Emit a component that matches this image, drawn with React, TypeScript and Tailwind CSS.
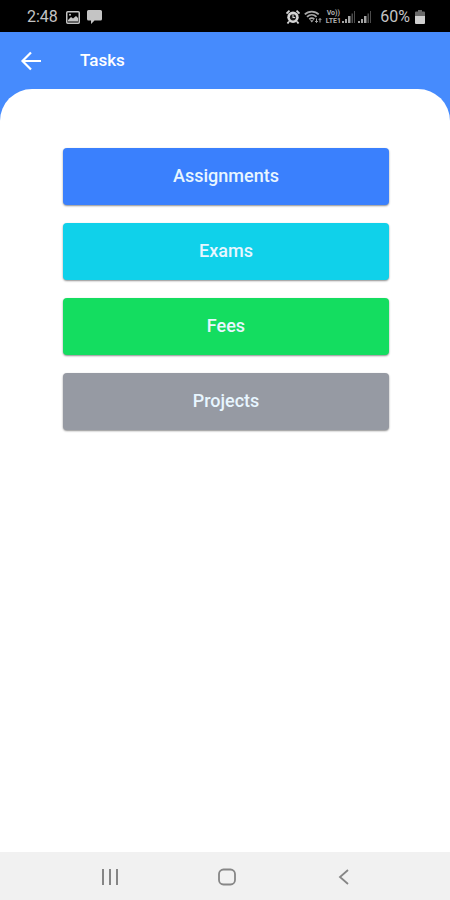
import React from "react";

const tasks = [
  { label: "Assignments", color: "bg-[#3a80fd]" },
  { label: "Exams", color: "bg-[#10d1ea]" },
  { label: "Fees", color: "bg-[#14dd60]" },
  { label: "Projects", color: "bg-[#969aa3]" },
];

function SignalIcon() {
  return (
    <svg className="h-[14px] w-[14px]" viewBox="0 0 14 14" fill="#a4a4a4" aria-hidden="true">
      <path d="M0 11h2v2H0zM3 9h2v4H3zM6 6h2.500v7H6z" />
      <path d="M9.500 3.500h1.500v9.500H9.500zM12 1h1v12h-1z" fill="#4c4c4c" />
    </svg>
  );
}

function StatusBar() {
  return (
    <div className="flex h-8 items-center justify-between bg-black pt-[2px] pr-[25px] pl-[27px] text-[16px] leading-[20px] text-[#c4c4c4]">
      <div className="flex items-center">
        <span>2:48</span>
        <svg className="ml-2 h-[13px] w-[14px]" viewBox="0 0 14 13" aria-hidden="true">
          <rect x="0.75" y="0.75" width="12.5" height="11.5" rx="1" fill="none" stroke="#c4c4c4" strokeWidth="1.5" />
          <path d="M2 9l3-3 2 1.5L10 5l2 2v3.5H2z" fill="#c4c4c4" />
          <circle cx="4" cy="3.8" r="1" fill="#c4c4c4" />
        </svg>
        <svg className="ml-[7px] h-[14px] w-[15px]" viewBox="0 0 15 14" fill="#c4c4c4" aria-hidden="true">
          <path d="M1.500 0h12A1.500 1.500 0 0 1 15 1.500v7.500a1.500 1.500 0 0 1-1.500 1.500H7.500L4 14v-3.500H1.500A1.500 1.500 0 0 1 0 9v-7.500A1.500 1.500 0 0 1 1.500 0z" />
        </svg>
      </div>

      <div className="flex items-center">
        <svg className="h-[14px] w-[14px]" viewBox="0 0 14 14" aria-hidden="true">
          <circle cx="7" cy="7.300" r="5.700" fill="#d6d6d6" />
          <path d="M0.500 3.500l3-2.800M13.500 3.500l-3-2.800M3 11.500l-1.500 2M11 11.500l1.500 2" stroke="#d6d6d6" strokeWidth="1.800" />
          <circle cx="7" cy="7.300" r="3.100" fill="#1a1a1a" />
          <path d="M7 4.500v3h2.200" fill="none" stroke="#d6d6d6" strokeWidth="1.100" />
        </svg>
        <svg className="ml-1 h-[14px] w-[18px]" viewBox="0 0 18 14" fill="none" stroke="#a8a8a8" aria-hidden="true">
          <path d="M0.800 4.300C4.500 0.600 11 0.600 14.700 4.300M3 6.800c2.800-2.600 6.800-2.600 9.500 0M5.300 9.200c1.500-1.300 3.500-1.300 5 0" strokeWidth="1.800" />
          <path d="M6 10.300h3.600L7.800 12.500z" fill="#a8a8a8" stroke="none" />
          <path d="M12.500 8.500v4m-1.300-1.500l1.300 1.500 1.300-1.500M16 12.500v-4m-1.300 1.500L16 8.500l1.300 1.500" strokeWidth="1" />
        </svg>
        <span className="ml-[2px] flex w-[18px] flex-col items-center text-[7px] leading-[8px] font-bold text-[#b0b0b0]">
          <span>Vo))</span>
          <span>LTE1</span>
        </span>
        <SignalIcon />
        <span className="ml-[2px]">
          <SignalIcon />
        </span>
        <span className="ml-2">60%</span>
        <svg className="ml-[5px] h-[14px] w-[10px]" viewBox="0 0 10 14" aria-hidden="true">
          <path d="M3 0h4v1.500h2a1 1 0 0 1 1 1V6H0V2.500a1 1 0 0 1 1-1h2z" fill="#6a6a6a" />
          <path d="M0 6h10v7a1 1 0 0 1-1 1H1a1 1 0 0 1-1-1z" fill="#d0d0d0" />
        </svg>
      </div>
    </div>
  );
}

function NavBar() {
  return (
    <nav className="grid h-12 grid-cols-3 bg-[#f1f1f1] pt-[2px] pr-[48px] pl-[51px] text-[#868686]">
      <button type="button" aria-label="Recent apps" className="flex items-center justify-center">
        <svg className="h-[18px] w-[18px]" viewBox="0 0 18 18" stroke="currentColor" strokeWidth="2" aria-hidden="true">
          <path d="M2 1v16M9 1v16M16 1v16" />
        </svg>
      </button>
      <button type="button" aria-label="Home" className="flex items-center justify-center">
        <svg className="h-[18px] w-[18px]" viewBox="0 0 18 18" fill="none" stroke="currentColor" strokeWidth="1.800" aria-hidden="true">
          <rect x="1" y="1.500" width="16" height="15" rx="4.500" />
        </svg>
      </button>
      <button type="button" aria-label="Back" className="flex items-center justify-center">
        <svg className="h-[18px] w-[18px]" viewBox="0 0 18 18" fill="none" stroke="currentColor" strokeWidth="1.800" aria-hidden="true">
          <path d="M13 2L5 9l8 7" />
        </svg>
      </button>
    </nav>
  );
}

export default function App() {
  return (
    <div className="flex min-h-screen flex-col bg-[#468bfd] font-[Roboto,sans-serif]">
      <StatusBar />

      <header className="flex h-[57px] items-center pl-5 text-white">
        <button type="button" aria-label="Go back">
          <svg className="h-[22px] w-[22px]" viewBox="0 0 22 22" fill="none" stroke="currentColor" strokeWidth="2.200" aria-hidden="true">
            <path d="M21 11H3M11 2.500L2.500 11l8.500 8.500" />
          </svg>
        </button>
        <h1 className="ml-[38px] pb-[2px] text-[17px] leading-[20px] font-medium">Tasks</h1>
      </header>

      <main className="flex-1 rounded-t-[32px] bg-white pt-[59px] pr-[61px] pl-[63px]">
        <div className="flex flex-col gap-[18px]">
          {tasks.map((task) => (
            <button
              key={task.label}
              type="button"
              className={`h-[57px] w-full rounded-sm pb-[2px] text-[18px] font-medium text-[#e8f6ff] shadow-[0_1px_2px_rgba(0,0,0,0.45)] ${task.color}`}
            >
              {task.label}
            </button>
          ))}
        </div>
      </main>

      <NavBar />
    </div>
  );
}
